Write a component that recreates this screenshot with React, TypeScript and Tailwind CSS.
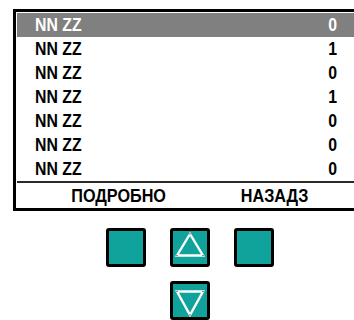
import React from "react";

const rows = [
  { label: "NN ZZ", value: "0" },
  { label: "NN ZZ", value: "1" },
  { label: "NN ZZ", value: "0" },
  { label: "NN ZZ", value: "1" },
  { label: "NN ZZ", value: "0" },
  { label: "NN ZZ", value: "0" },
  { label: "NN ZZ", value: "0" },
];

const font = {
  fontFamily: '"Liberation Sans", Arial, sans-serif',
};

function Triangle({ dir }: { dir: "up" | "down" }) {
  const pts =
    dir === "up"
      ? [
          [17, 3],
          [4, 24.5],
          [30, 24.5],
        ]
      : [
          [4, 7.5],
          [30, 7.5],
          [17, 31],
        ];
  return (
    <svg width="34" height="34" viewBox="0 0 34 34" className="block">
      <polygon
        points={pts.map((p) => p.join(",")).join(" ")}
        fill="none"
        stroke="white"
        strokeWidth="2.4"
        strokeLinejoin="miter"
      />
      {pts.map((p, i) => (
        <circle key={i} cx={p[0]} cy={p[1]} r="0.8" fill="#4a6f6c" />
      ))}
    </svg>
  );
}

function KeyButton({ children }: { children?: React.ReactNode }) {
  return (
    <div className="w-[40px] h-[39px] border-[3px] border-black rounded-[3px] bg-[#10a39b] overflow-hidden">
      {children}
    </div>
  );
}

export default function App() {
  return (
    <div className="w-[354px] h-[320px] overflow-hidden bg-white" style={font}>
      {/* screen, open on the right */}
      <div className="mt-[9px] ml-[13px] w-[341px] border-t-[3px] border-l-[3px] border-b-[3px] border-black pt-[1px] pl-[1px]">
        {rows.map((r, i) => (
          <div
            key={i}
            className={`h-[24px] flex items-center justify-between pl-[18px] pr-[17px] text-[18px] font-bold leading-none ${
              i === 0 ? "bg-[#808080] text-white" : "text-black"
            }`}
          >
            <span className="inline-block origin-left scale-x-[0.88]">{r.label}</span>
            <span className="inline-block origin-right scale-x-[0.88]">{r.value}</span>
          </div>
        ))}
        <div className="h-[2px] bg-[#2a2a2a]" />
        <div className="h-[25px] flex items-center text-[18px] font-bold leading-none text-black">
          <div className="w-[204px] text-center">
            <span className="inline-block scale-x-[0.9]">ПОДРОБНО</span>
          </div>
          <div className="w-[107px] text-center">
            <span className="inline-block scale-x-[0.9]">НАЗАДЗ</span>
          </div>
        </div>
      </div>

      {/* keys */}
      <div className="mt-[17px] pl-[106px] flex flex-col gap-[14px]">
        <div className="flex gap-[24px]">
          <KeyButton />
          <KeyButton>
            <Triangle dir="up" />
          </KeyButton>
          <KeyButton />
        </div>
        <div className="pl-[64px]">
          <KeyButton>
            <Triangle dir="down" />
          </KeyButton>
        </div>
      </div>
    </div>
  );
}
